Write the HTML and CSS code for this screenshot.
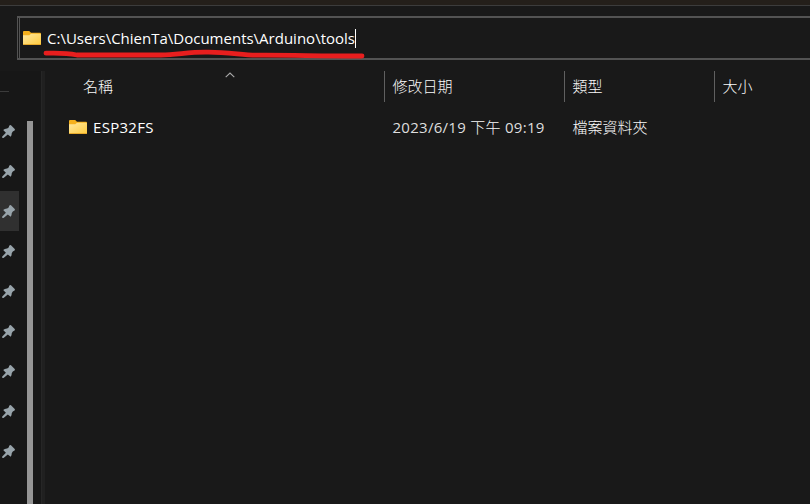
FILE: index.html
```html
<!DOCTYPE html>
<html lang="zh-Hant">
<head>
<meta charset="utf-8">
<title>tools</title>
<link rel="stylesheet" href="styles.css">
</head>
<body>
<svg width="0" height="0" class="defs" aria-hidden="true">
  <defs>
    <linearGradient id="paper" x1="0" y1="0" x2="1" y2="1">
      <stop offset="0" stop-color="#ffe8a0"/>
      <stop offset="1" stop-color="#ffcb3d"/>
    </linearGradient>
    <symbol id="folder" viewBox="0 0 18 14">
      <path d="M0 1Q0 0 1 0H6.2L8 1.7H17Q18 1.7 18 2.7V8H0Z" fill="#f5b01c"/>
      <path d="M0 4.2H6.3L8 2.8H17.2Q18 2.8 18 3.6V13Q18 14 17 14H1Q0 14 0 13Z" fill="url(#paper)"/>
      <path d="M0 13Q0 14 1 14H17Q18 14 18 13Z" fill="#e8aa2b"/>
    </symbol>
    <symbol id="pin" viewBox="0 0 13 13">
      <path d="M7.4.4Q8.2-.3 9 .3L12.7 4Q13.2 4.9 12.5 5.5L10.8 6.6L9.7 8.3Q9.9 10.2 8.7 11.8L5.8 9.4L1.5 12.9Q.3 13.2 0 12.3Q0 11.7.5 11.3L3.9 7.7L1.2 5.1Q2.7 3.5 5.2 3.6L6.9 2.2Q6.8 1.1 7.4.4Z" fill="#98a4ab"/>
    </symbol>
  </defs>
</svg>
<div class="window">
  <div class="titlebar"></div>
  <div class="toolbar">
    <div class="address"><div class="field">
      <svg class="folder"><use href="#folder"/></svg>
      <span class="path">C:\Users\ChienTa\Documents\Arduino\tools</span><span class="caret"></span>
      <svg class="marker" viewBox="0 0 324 12"><path d="M3 5.2C14 4.8 24 5 34 7H118C135 6.8 145 4 164 4.2C184 4 199 7 214 7.2C252 7 270 8 319 8" fill="none" stroke="#e81e1e" stroke-width="4.8" stroke-linecap="round"/></svg>
    </div></div>
  </div>
  <div class="main">
    <nav class="sidebar">
      <div class="pins">
        <div class="separator"></div>
        <div class="pin"><svg><use href="#pin"/></svg></div>
        <div class="pin"><svg><use href="#pin"/></svg></div>
        <div class="pin active"><svg><use href="#pin"/></svg></div>
        <div class="pin"><svg><use href="#pin"/></svg></div>
        <div class="pin"><svg><use href="#pin"/></svg></div>
        <div class="pin"><svg><use href="#pin"/></svg></div>
        <div class="pin"><svg><use href="#pin"/></svg></div>
        <div class="pin"><svg><use href="#pin"/></svg></div>
        <div class="pin"><svg><use href="#pin"/></svg></div>
      </div>
      <div class="scrollbar"></div>
    </nav>
    <section class="list">
      <div class="row head">
        <div class="cell name"><span class="cjk">名稱</span><svg class="sort" viewBox="0 0 10 6"><path d="M.7 5.2L5 1L9.3 5.2" fill="none" stroke="#aaa" stroke-width="1.1"/></svg></div>
        <div class="cell"><span class="cjk">修改日期</span></div>
        <div class="cell"><span class="cjk">類型</span></div>
        <div class="cell"><span class="cjk">大小</span></div>
      </div>
      <div class="row file">
        <div class="cell name"><svg class="folder"><use href="#folder"/></svg><span class="filename">ESP32FS</span></div>
        <div class="cell date"><span>2023/6/19 <span class="cjk">下午</span> 09:19</span></div>
        <div class="cell"><span class="cjk">檔案資料夾</span></div>
        <div class="cell"></div>
      </div>
    </section>
  </div>
</div>
</body>
</html>
```

FILE: styles.css
```css
* { box-sizing: border-box; }
body {
  margin: 0;
  background: #191919;
  color: #dedede;
  font: 15px/20px "Open Sans", "Noto Sans CJK TC", sans-serif;
  overflow: hidden;
}
svg { display: block; flex: none; }
.defs { position: absolute; }
.cjk { font-weight: 300; color: #fafafa; }
.window { display: flex; flex-direction: column; height: 504px; }
.titlebar { height: 6px; background: #241f1a; border-bottom: 1px solid #3c3c3c; }
.toolbar { height: 65px; padding: 10px 0 0 17px; }
.address {
  height: 44px;
  padding-left: 1px;
  border: solid #535353;
  border-width: 2px 0 2px 1px;
}
.field {
  position: relative;
  display: flex;
  align-items: center;
  height: 40px;
  padding-left: 3px;
  border-left: 1px solid #535353;
}
.folder { width: 18px; height: 14px; }
.path { margin-left: 6px; color: #fff; white-space: nowrap; width: 308px; }
.caret { width: 1px; height: 19px; background: #fff; }
.marker { position: absolute; left: 23px; top: 30px; width: 324px; height: 12px; }
.main { display: flex; flex: 1; }
.sidebar {
  display: flex;
  width: 45px;
  background: #171717;
  border-right: 3px solid #202020;
  box-shadow: inset -1px 0 #262626;
}
.pins { width: 19px; padding-top: 20px; }
.separator { width: 9px; height: 1px; margin-bottom: 19px; background: #3b3b3b; }
.pin { height: 40px; padding: 14px 0 0 2px; }
.pin svg { width: 13px; height: 13px; }
.pin.active { background: #303030; }
.scrollbar { width: 6px; margin: 50px 0 0 8px; background: #959595; }
.list { flex: 1; }
.row { display: grid; grid-template-columns: 340px 180px 150px 1fr; }
.head { height: 31px; }
.cell { display: flex; align-items: center; padding-left: 7.5px; white-space: nowrap; }
.head .cell { border-right: 1px solid #606060; padding-bottom: 2px; }
.head .cell:last-child { border-right: 0; }
.head .cell.name { position: relative; padding-left: 38px; }
.sort { position: absolute; left: 180px; top: 1px; width: 10px; height: 6px; }
.file { height: 40px; margin-top: 5px; }
.file .cell.name { padding-left: 24px; }
.filename { margin-left: 6px; color: #fff; letter-spacing: .3px; }
.date { letter-spacing: .28px; }
```
